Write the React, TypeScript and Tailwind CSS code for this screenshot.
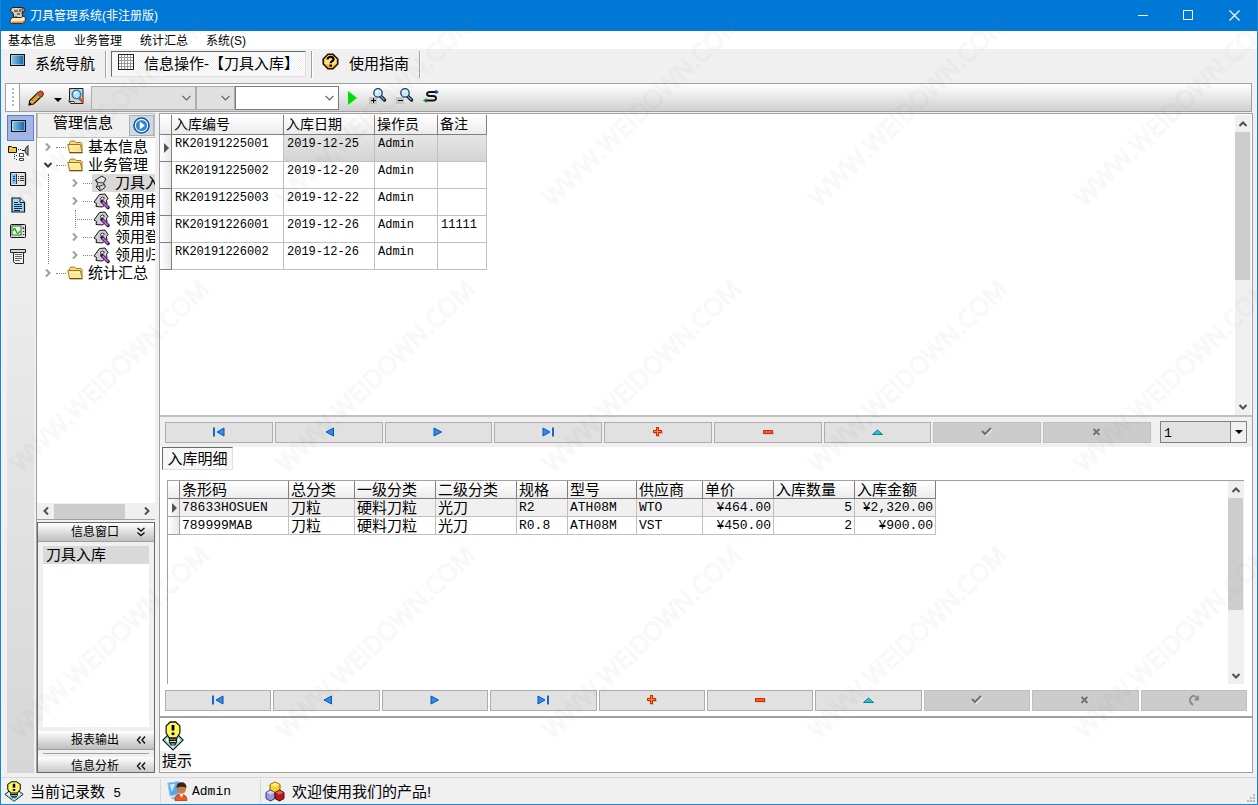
import type { ReactNode } from "react";

const TREE_CHILDREN = [
  { label: "刀具入库", arrow: true, active: true },
  { label: "领用申请", arrow: true },
  { label: "领用审核", arrow: false },
  { label: "领用登记", arrow: true },
  { label: "领用归还", arrow: true },
];

const ORDERS = [
  ["RK20191225001", "2019-12-25", "Admin", ""],
  ["RK20191225002", "2019-12-20", "Admin", ""],
  ["RK20191225003", "2019-12-22", "Admin", ""],
  ["RK20191226001", "2019-12-26", "Admin", "11111"],
  ["RK20191226002", "2019-12-26", "Admin", ""],
];

const DETAIL_HEAD = ["条形码", "总分类", "一级分类", "二级分类", "规格", "型号", "供应商", "单价", "入库数量", "入库金额"];

const DETAILS = [
  ["78633HOSUEN", "刀粒", "硬料刀粒", "光刀", "R2", "ATH08M", "WTO", "¥464.00", "5", "¥2,320.00"],
  ["789999MAB", "刀粒", "硬料刀粒", "光刀", "R0.8", "ATH08M", "VST", "¥450.00", "2", "¥900.00"],
];

const NAV = ["first", "prev", "next", "last", "add", "remove", "edit", "post", "cancel", "refresh"];

/* ---------- icons ---------- */

function ScrollLogo() {
  return (
    <svg width="18" height="18" viewBox="0 0 18 18">
      <path d="M2 2q0-1.500 2-1.500h9q3 0 3 2.500T14 5.500h-1l1 5.500H5L4 6 1.500 4z" fill="#d6cfb8" stroke="#2b1c10" />
      <path d="M5 3h4v2H5zM8 6h3v2H8zM6 9h2v1H6zM10 2h2v3h-2z" fill="#77705f" />
      <path d="M13 1.500h2.500v3H13z" fill="#c08f5c" stroke="#5a3518" strokeWidth=".8" />
      <path d="M2 12q0-1.500 2-1.500h8.500l1.500-1.500 2.500 1.500-.5 4-2.500 2H3q-2 0-2-2z" fill="#fdeed0" stroke="#4a2a10" />
      <path d="M2 14.500h11l2-1v1.500l-2 1H3z" fill="#e2873a" />
    </svg>
  );
}

function ScreenIcon() {
  return (
    <svg width="16" height="13" viewBox="0 0 16 13" shapeRendering="crispEdges" className="shrink-0">
      <defs>
        <linearGradient id="screen" x1="0" x2="1">
          <stop offset="0" stopColor="#8fd0ee" />
          <stop offset="1" stopColor="#0d5c9e" />
        </linearGradient>
      </defs>
      <rect x="0.500" y="0.500" width="14" height="11" fill="url(#screen)" stroke="#111" />
      <rect x="1.500" y="1.500" width="12" height="9" fill="none" stroke="#cfeafa" strokeOpacity=".5" />
    </svg>
  );
}

function GridIcon() {
  return (
    <svg width="17" height="17" viewBox="0 0 17 17" shapeRendering="crispEdges" className="mb-1 shrink-0">
      <rect x="0.500" y="0.500" width="15" height="15" fill="#fff" stroke="#222" />
      <path d="M3.500 1v14M6.500 1v14M9.500 1v14M12.500 1v14M1 3.500h14M1 6.500h14M1 9.500h14M1 12.500h14" stroke="#999" />
    </svg>
  );
}

function HelpIcon() {
  return (
    <svg width="17" height="18" viewBox="0 0 17 18">
      <path d="M6 1.200h5l4.800 4.800v5L11 15.800H6L1.200 11V6z" fill="#f4b73a" stroke="#1a0c00" strokeWidth="1.500" />
      <path d="M6 2.500h4L14 6v4l-2 2-9-1V6z" fill="#ffe28c" />
      <path d="M5.500 6.500c0-3.400 6-3.400 6 0 0 1.800-2.800 1.600-2.800 3.700" fill="none" stroke="#000" strokeWidth="2.200" />
      <rect x="7.500" y="11.500" width="2.400" height="2.200" />
    </svg>
  );
}

function PencilIcon() {
  return (
    <svg width="16" height="16" viewBox="0 0 16 16">
      <path d="M1 15l.8-4.500L10 2.500l4 3.500-8.500 8z" fill="#f3b13c" stroke="#1a1200" strokeWidth="1.200" />
      <path d="M4 11l6.500-6.500M6 12.500l6-6" stroke="#8a520c" strokeDasharray="1.500 1" />
      <path d="M10.500 2q2-2 4-.2T14.500 6l-1.500 1-4-3.500z" fill="#ea4a26" stroke="#6a1a08" />
      <path d="M8.800 3.700l3.800 3.800" stroke="#4f9a68" strokeWidth="1.600" />
      <path d="M1 15l.5-3L4 14.300z" />
    </svg>
  );
}

function FindIcon() {
  return (
    <svg width="17" height="17" viewBox="0 0 17 17">
      <path d="M1.500.5h13.500v15H3L.8 13.500 1.500 12z" fill="#d4d4d4" stroke="#222" />
      <path d="M1 13.500h5l1 2" stroke="#333" fill="#fff" />
      <path d="M11 10l4 4" stroke="#e0501a" strokeWidth="2.600" />
      <circle cx="8.500" cy="6.500" r="4.200" fill="#b4e6fa" stroke="#2583b8" strokeWidth="1.600" />
      <path d="M6.500 6q.5-2 2.500-2" stroke="#fff" fill="none" strokeWidth="1.300" />
    </svg>
  );
}

function LensIcon({ plus }: { plus?: boolean }) {
  return (
    <svg width="18" height="17" viewBox="0 0 18 17">
      <path d="M0 9h8v7H0z" fill="#c4c4c4" />
      <path d="M11.500 8l4 4" stroke="#111" strokeWidth="3.400" strokeLinecap="round" />
      <path d="M11.500 8l4 4" stroke="#6ea4e0" strokeWidth="1.500" />
      <circle cx="9" cy="4.900" r="4.200" fill="#c8effc" stroke="#1c3a60" strokeWidth="1.300" />
      <path d="M7 5q.3-2 2-2.200" fill="none" stroke="#fff" strokeWidth="1.300" />
      <path d={plus ? "M2 12.500h5M4.500 10v5" : "M2 12.500h5"} stroke="#000" strokeWidth="1" shapeRendering="crispEdges" />
    </svg>
  );
}

function SwapIcon() {
  return (
    <svg width="17" height="15" viewBox="0 0 17 15" fill="none">
      <path d="M13.500 3H7Q4 3 4 5t3 2h3q3 0 3 2.300T10 11.500H3" stroke="#111" strokeWidth="1.900" />
      <path d="M12.500.5L16 3l-3.500 2.500z" fill="#1e50d8" />
      <path d="M3.500 9L0 11.500 3.500 14z" fill="#1f8a1f" />
    </svg>
  );
}

function FlowIcon() {
  return (
    <svg width="21" height="17" viewBox="0 0 21 17" className="shrink-0">
      <path d="M.5 1.500h3l1 1h4v5h-8z" fill="#f9c63a" stroke="#111" />
      <path d="M10 4.500h4M6.500 9v5M8 10.500h2M8 14.500h2" stroke="#333" strokeDasharray="1 1" />
      <path d="M11.500 8.500h4v3h-4zM11.500 13.500h4v2h-4z" fill="#fff" stroke="#444" />
      <path d="M20 .5q-6 5 0 10z" fill="#aaa" stroke="#222" />
      <path d="M14 5.500h3" stroke="#111" />
    </svg>
  );
}

function FormIcon() {
  return (
    <svg width="17" height="15" viewBox="0 0 17 15" className="shrink-0">
      <rect x="0.500" y="0.500" width="15" height="13" rx="1" fill="#e4e4e4" stroke="#111" strokeWidth="1.200" />
      <rect x="2" y="2" width="4" height="10" fill="#7cc4ee" />
      <path d="M3 4.500h2M3 6.500h2M3 8.500h2" stroke="#0a4f8a" />
      <path d="M6.500 2v10M8 4.500h1M10 4.500h4M8 6.500h1M10 6.500h4M8 8.500h1M10 8.500h4" stroke="#333" />
    </svg>
  );
}

function DocIcon() {
  return (
    <svg width="15" height="16" viewBox="0 0 15 16" className="shrink-0">
      <path d="M1 1h8l4.500 4.500V15H1z" fill="#9fd8f5" stroke="#111" strokeWidth="1.200" />
      <path d="M9 1v4.500h4.500" fill="#e8f7ff" stroke="#111" />
      <path d="M3 5.500h4M3 7.500h8M3 9.500h8M3 11.500h8M3 13.500h6" stroke="#0c2a4a" />
    </svg>
  );
}

function WaveIcon() {
  return (
    <svg width="17" height="15" viewBox="0 0 17 15" className="shrink-0">
      <rect x="0.500" y="0.500" width="15" height="13" rx="1" fill="#ddd" stroke="#111" />
      <rect x="2" y="2" width="9" height="9" fill="#e4ffe4" stroke="#3a6a3a" />
      <path d="M3 7q1.500-5 3 0t4 0" fill="none" stroke="#10b010" strokeWidth="1.300" />
      <path d="M13.500 3v2M13.500 7v1M13.500 10v1" stroke="#333" strokeWidth="1.300" />
    </svg>
  );
}

function PrinterIcon() {
  return (
    <svg width="17" height="16" viewBox="0 0 17 16" className="shrink-0">
      <path d="M.5.500h15v3H.5z" fill="#d8d8d8" stroke="#222" />
      <path d="M3.500 3.500h10v11h-8.500l-1.500-2z" fill="#f4f4f4" stroke="#222" />
      <path d="M5 5.500h7M5 7.500h7M5 9.500h7M5 11.500h5" stroke="#666" />
    </svg>
  );
}

function FolderIcon() {
  return (
    <svg width="17" height="14" viewBox="0 0 17 14" className="mb-px shrink-0">
      <path d="M2.500 11V2.500L4 1h3.500l1.500 1.500H14l1 1V11z" fill="#f6dc80" stroke="#a07a18" />
      <path d="M.8 4.500h12.500l2 8H2.500z" fill="#ffe994" stroke="#a07a18" />
      <path d="M2.500 12.800h13" stroke="#5a4208" />
      <path d="M3 6.500h9.500" stroke="#fff8d0" />
    </svg>
  );
}

function RollIcon() {
  return (
    <svg width="16" height="17" viewBox="0 0 16 17">
      <path d="M2.500 5L9 1l4 3-2.500 4 2 4L7 16l-4-4 2-3z" fill="#dedede" stroke="#222" />
      <path d="M2.500 5l3 2.500L10.500 8M3 12l3.500-1L7 16M6.500 11l5-1.500" stroke="#333" fill="none" />
      <path d="M8 3l3 1.500" stroke="#fff" />
    </svg>
  );
}

function TagIcon() {
  return (
    <svg width="18" height="17" viewBox="0 0 18 17">
      <path d="M6.500 1.500L12 1l3 4.500-1.500 2L14 11l-5 3-6-.5.500-3L1 9z" fill="#cfcfcf" stroke="#111" />
      <path d="M7.500 5q2-2 4 0l-3 3z" fill="#fff" stroke="#333" />
      <path d="M9 8.500l6 6" stroke="#2a1038" strokeWidth="3.400" strokeLinecap="round" />
      <path d="M9.500 9l5.500 5.500" stroke="#c05ce0" strokeWidth="1.800" />
    </svg>
  );
}

function PlayCircle() {
  return (
    <svg width="17" height="17" viewBox="0 0 17 17">
      <circle cx="8.500" cy="8.500" r="7.500" fill="#fff" stroke="#0f56a8" strokeWidth="1.600" />
      <circle cx="8.500" cy="8.500" r="5.600" fill="#2f86d8" />
      <path d="M6.800 4.600v7.800l5-3.900z" fill="#fff" />
    </svg>
  );
}

function BulbIcon({ size }: { size: "lg" | "sm" }) {
  return (
    <svg width={size === "lg" ? 22 : 20} height={size === "lg" ? 30 : 21} viewBox="0 0 24 30" preserveAspectRatio="none" className="shrink-0">
      <path d="M12 9L23 19 12 29 1 19z" fill="#fff" stroke="#111" strokeWidth="1.200" />
      <path d="M12 11l9 8-9 8.500L3 19z" fill="#fff" stroke="#19d6d6" />
      <path d="M8 17h8v4l-2 3h-4l-2-3z" fill="#ddd" stroke="#111" strokeWidth="1.200" />
      <path d="M8 19.200h8M9 21.800h6" stroke="#111" strokeWidth="1.400" />
      <path d="M9 1h6l4.500 4v7L16 17H8l-3.500-5V5z" fill="#fdf85a" stroke="#111" strokeWidth="1.300" />
      <path d="M12 4v5.500" stroke="#000" strokeWidth="3" />
      <rect x="10.500" y="11.500" width="3" height="2.600" />
    </svg>
  );
}

function UserIcon() {
  return (
    <svg width="21" height="20" viewBox="0 0 21 20" className="shrink-0">
      <path d="M.8 2l11-1.500v13L3 15z" fill="#58a6ea" stroke="#9cc9ee" />
      <path d="M2.500 3.500l6-1L5 11z" fill="#c4e8fc" />
      <path d="M4 16.500l6-1.500v3l-5 .5z" fill="#a9bccd" />
      <path d="M8 19.500q-.5-6 6-6.500 6 .5 6 6.500z" fill="#ea5a24" stroke="#a83a10" strokeWidth=".8" />
      <circle cx="14.500" cy="8" r="4.600" fill="#d27a3c" />
      <path d="M9.500 7q0-5.800 5-5.800T19.500 7q-5-2.500-10 0z" fill="#33241c" />
      <path d="M12.500 13h4l-2 3.500z" fill="#fff" />
    </svg>
  );
}

function CubesIcon() {
  return (
    <svg width="20" height="21" viewBox="0 0 20 21" className="shrink-0">
      <path d="M10 1l5 2.500V10l-5 2-5-2V3.500z" fill="#ffd21e" stroke="#8a5a00" />
      <path d="M10 1.500l4.500 2.200L10 6 5.500 3.700z" fill="#fff27a" />
      <path d="M5.500 9l4.500 2.500v6L5.500 20 1 17.500v-6z" fill="#9a9ae0" stroke="#33336a" />
      <path d="M5.500 9.500l4 2-4 2-4-2z" fill="#d4d4ff" />
      <path d="M14.500 9l4.500 2.500v6L14.500 20 10 17.500v-6z" fill="#b81818" stroke="#4a0404" />
      <path d="M14.500 9.500l4 2-4 2-4-2z" fill="#e86050" />
    </svg>
  );
}

function Chevron({ dir, color = "#505050" }: { dir: "up" | "down" | "left" | "right"; color?: string }) {
  const d = { up: "M1.500 7L5 3.500 8.500 7", down: "M1.500 3L5 6.500 8.500 3", left: "M7 1.500L3.500 5 7 8.500", right: "M3 1.500L6.500 5 3 8.500" }[dir];
  return (
    <svg width="10" height="10" viewBox="0 0 10 10" fill="none" stroke={color} strokeWidth="2" className="shrink-0">
      <path d={d} />
    </svg>
  );
}

function NavGlyph({ name }: { name: string }) {
  const blue = { fill: "#2a8cf0", stroke: "#0a55b4" };
  return (
    <svg width="14" height="14" viewBox="0 0 14 14">
      {name === "first" && <><path d="M2 2.500v9" stroke="#1668cc" strokeWidth="2" /><path d="M12 3v8L5 7z" {...blue} /></>}
      {name === "prev" && <path d="M11.500 3v8L4 7z" {...blue} />}
      {name === "next" && <path d="M3 3v8l7.500-4z" {...blue} />}
      {name === "last" && <><path d="M12 2.500v9" stroke="#1668cc" strokeWidth="2" /><path d="M2 3v8l7-4z" {...blue} /></>}
      {name === "add" && <><path d="M7 3v9M3 7.500h9" stroke="#999" strokeWidth="3" opacity=".5" /><path d="M6.500 2v9M2 6.500h9" stroke="#d02c00" strokeWidth="3" /><path d="M6.500 3v7M3 6.500h7" stroke="#ff8a3a" /></>}
      {name === "remove" && <><path d="M3 8h10" stroke="#999" strokeWidth="3" opacity=".5" /><path d="M2 7h10" stroke="#d82c00" strokeWidth="4" /><path d="M3 7h8" stroke="#ff9a3a" /></>}
      {name === "edit" && <path d="M1.500 9.500h10l-5-4.500z" fill="#25c4dc" stroke="#0c7f94" />}
      {name === "post" && <><path d="M3 7l3 3 6-6" fill="none" stroke="#eee" strokeWidth="2" /><path d="M2 6l3 3 6-6" fill="none" stroke="#707070" strokeWidth="2" /></>}
      {name === "cancel" && <><path d="M4 4.500l6 6m0-6l-6 6" stroke="#eee" strokeWidth="2" /><path d="M3.500 4l6 6m0-6l-6 6" stroke="#707070" strokeWidth="2" /></>}
      {name === "refresh" && <><path d="M6 12Q1 8 4 4.500T10 5" fill="none" stroke="#8c8c8c" strokeWidth="2" /><path d="M12 2v5.500H6.500z" fill="#8c8c8c" /></>}
    </svg>
  );
}

/* ---------- shared pieces ---------- */

function Navigator({ names }: { names: string[] }) {
  return (
    <div className="flex min-w-0 flex-1 gap-0.5">
      {names.map((n) => {
        const off = ["post", "cancel", "refresh"].includes(n);
        return (
          <button
            key={n}
            aria-label={n}
            disabled={off}
            className={`flex h-[21px] flex-1 items-center justify-center border ${off ? "border-[#bfbfbf] bg-[#ccc]" : "border-[#adadad] bg-[#e1e1e1]"}`}
          >
            <NavGlyph name={n} />
          </button>
        );
      })}
    </div>
  );
}

function VScroll({ thumb }: { thumb: string }) {
  return (
    <div className="flex w-4 shrink-0 flex-col bg-[#f0f0f0]">
      <div className="flex h-[17px] items-center justify-center"><Chevron dir="up" /></div>
      <div className="flex-1"><div className={`w-[15px] bg-[#cdcdcd] ${thumb}`} /></div>
      <div className="flex h-[17px] items-center justify-center"><Chevron dir="down" /></div>
    </div>
  );
}

function Combo({ className, label, children }: { className: string; label: string; children?: ReactNode }) {
  return (
    <div className={`relative h-6 border ${className}`}>
      <select aria-label={label} className="size-full appearance-none bg-transparent outline-none">
        <option>{children}</option>
      </select>
      <div className="pointer-events-none absolute inset-y-0 right-1 flex items-center">
        <svg width="9" height="6" viewBox="0 0 9 6" fill="none" stroke="#606060" strokeWidth="1.200"><path d="M.5.800l4 4 4-4" /></svg>
      </div>
    </div>
  );
}

function Separator() {
  return <div className="h-[27px] w-0.5 border-l border-[#a0a0a0] bg-white" />;
}

function RowMarker() {
  return (
    <svg width="6" height="10" viewBox="0 0 6 10" className="ml-1">
      <path d="M0 0v10l5-5z" fill="#555" />
    </svg>
  );
}

function BarTitle({ title, open, height }: { title: string; open?: boolean; height: string }) {
  return (
    <button className={`flex w-full shrink-0 items-center overflow-hidden border-b border-[#a0a0a0] bg-linear-to-b from-white to-[#bfbfbf] pr-2 pl-[33px] text-xs ${height}`}>
      <span className="flex-1 text-left">{title}</span>
      <svg width="10" height="10" viewBox="0 0 10 10" fill="none" stroke="#111" strokeWidth="1.400">
        <path d={open ? "M1.500 1L5 4l3.500-3M1.500 5.500L5 8.500l3.500-3" : "M4.500 1.500L1.500 5l3 3.500M9 1.500L6 5l3 3.500"} />
      </svg>
    </button>
  );
}

function TreeRoot({ label, open }: { label: string; open?: boolean }) {
  return (
    <li className="flex h-[18px] items-center">
      <span className="ml-[6px]"><Chevron dir={open ? "down" : "right"} color={open ? "#333" : "#a0a0a0"} /></span>
      <span className="mr-px ml-[3px] w-[10px] border-t border-dotted border-[#808080]" />
      <FolderIcon />
      <span className="ml-1 whitespace-nowrap">{label}</span>
    </li>
  );
}

function Watermark() {
  return (
    <svg className="pointer-events-none absolute inset-0 size-full" aria-hidden="true">
      <defs>
        <g id="mark">
          <text
            transform="rotate(-44)"
            fill="none"
            stroke="#808080"
            strokeOpacity=".07"
            strokeWidth="1.500"
            fontSize="25"
            className="font-['Open_Sans',sans-serif]"
          >
            WWW.WEIDOWN.COM
          </text>
        </g>
      </defs>
      {[0, 1, 2, 3, 4].map((c) =>
        [0, 1, 2].map((r) => <use key={`${c}-${r}`} href="#mark" x={20 + c * 266} y={208 + r * 266} />)
      )}
    </svg>
  );
}

/* ---------- panels ---------- */

function Sidebar() {
  return (
    <aside className="flex w-[120px] shrink-0 flex-col overflow-hidden border-l border-[#a0a0a0] pr-px">
      <div className="flex h-[25px] shrink-0 items-center justify-between border border-[#c0c0c0] bg-[#f0f0f0] pl-[15px] text-[15px]">
        <span className="mb-1 whitespace-nowrap">管理信息</span>
        <button aria-label="展开" className="flex h-[21px] w-[25px] items-center justify-center border border-[#a8b0bc] bg-[#d3d7de]">
          <PlayCircle />
        </button>
      </div>

      {/* tree */}
      <div className="flex min-h-0 flex-1 flex-col bg-white">
        <ul className="min-h-0 flex-1 overflow-hidden text-[15px] leading-[18px]">
          <TreeRoot label="基本信息" />
          <TreeRoot label="业务管理" open />
          <li className="ml-[11px] border-l border-dotted border-[#808080]">
            <ul>
              {TREE_CHILDREN.map((t) => (
                <li key={t.label} className="flex h-[18px] items-center">
                  <span className="ml-[21px] flex h-full w-[11px] shrink-0 items-center">
                    {t.arrow ? <Chevron dir="right" color="#a0a0a0" /> : <i className="ml-[5px] h-full w-px border-l border-dotted border-[#808080]" />}
                  </span>
                  <span className={`h-0 shrink-0 border-t border-dotted border-[#808080] ${t.arrow ? "ml-0.5 w-[9px]" : "-ml-1 w-[15px]"}`} />
                  <span className={`flex h-full min-w-0 flex-1 items-center overflow-hidden ${t.active ? "bg-[#d9d9d9]" : ""}`}>
                    <span className="flex w-[23px] shrink-0 pl-px">{t.active ? <RollIcon /> : <TagIcon />}</span>
                    <span className="whitespace-nowrap">{t.label}</span>
                  </span>
                </li>
              ))}
            </ul>
          </li>
          <TreeRoot label="统计汇总" />
        </ul>
        <div className="flex h-[17px] shrink-0 items-center border-b border-[#a0a0a0] bg-[#f0f0f0]">
          <div className="flex w-[17px] justify-center"><Chevron dir="left" /></div>
          <div className="flex h-[15px] flex-1"><div className="w-[71px] bg-[#cdcdcd]" /></div>
          <div className="flex w-[17px] justify-center"><Chevron dir="right" /></div>
        </div>
      </div>

      {/* accordion, the last bar runs out under the frame */}
      <div className="mt-0.5 flex h-[251px] shrink-0 flex-col overflow-hidden border border-[#696969] bg-[#f0f0f0]">
        <BarTitle title="信息窗口" open height="h-[19px]" />
        <div className="mx-[5px] my-1 h-[181px] shrink-0 bg-white text-[15px] leading-[18px]">
          <div className="bg-[#d9d9d9] pl-[3px]">刀具入库</div>
        </div>
        <BarTitle title="报表输出" height="h-[19px]" />
        <div className="mx-[5px] my-[3px] h-px shrink-0 bg-[#a0a0a0]" />
        <BarTitle title="信息分析" height="h-[19px]" />
      </div>
    </aside>
  );
}

function OrderTable() {
  const head = "border-r border-b border-[#808080] bg-linear-to-b from-white to-[#ececec] p-0";
  return (
    <table className="w-[327px] table-fixed border-separate border-spacing-0 self-start">
      <colgroup>
        <col className="w-[12px]" /><col className="w-[112px]" /><col className="w-[91px]" /><col className="w-[63px]" /><col className="w-[49px]" />
      </colgroup>
      <thead>
        <tr className="h-5 text-left text-sm leading-[19px]">
          <th className={head} />
          {["入库编号", "入库日期", "操作员", "备注"].map((h) => (
            <th key={h} className={`${head} pl-0.5 font-normal whitespace-nowrap`}>{h}</th>
          ))}
        </tr>
      </thead>
      <tbody>
        {ORDERS.map((row, i) => (
          <tr key={row[0]} className="h-[27px] align-top font-['Liberation_Mono','Noto_Sans_CJK_SC',monospace] text-xs leading-[18px]">
            <td className="border-r border-b border-[#808080] bg-linear-to-r from-white to-[#e8e8e8] p-0 align-middle">{i === 0 && <RowMarker />}</td>
            {row.map((v, j) => (
              <td key={j} className={`border-r border-b border-[#c0c0c0] py-0 pr-0 pl-[3px] whitespace-nowrap ${i === 0 && j > 0 ? "bg-linear-to-b from-[#e6e6e6] to-[#d4d4d4]" : ""}`}>{v}</td>
            ))}
          </tr>
        ))}
      </tbody>
    </table>
  );
}

function DetailTable() {
  const head = "border-r border-b border-[#808080] bg-linear-to-b from-white to-[#ececec] p-0";
  return (
    <table className="w-[768px] table-fixed border-separate border-spacing-0 self-start text-[15px]">
      <colgroup>
        <col className="w-[12px]" /><col className="w-[109px]" /><col className="w-[66px]" /><col className="w-[81px]" />
        <col className="w-[81px]" /><col className="w-[51px]" /><col className="w-[69px]" /><col className="w-[66px]" />
        <col className="w-[71px]" /><col className="w-[81px]" /><col className="w-[81px]" />
      </colgroup>
      <thead>
        <tr className="h-[18px] text-left leading-[17px]">
          <th className={head} />
          {DETAIL_HEAD.map((h) => (
            <th key={h} className={`${head} pl-0.5 font-normal whitespace-nowrap`}>{h}</th>
          ))}
        </tr>
      </thead>
      <tbody>
        {DETAILS.map((row, i) => (
          <tr key={row[0]} className={`h-[18px] leading-[17px] ${i === 0 ? "bg-[#f0f0f0]" : ""}`}>
            <td className="border-r border-b border-[#a0a0a0] bg-linear-to-r from-white to-[#e8e8e8] p-0">{i === 0 && <RowMarker />}</td>
            {row.map((v, j) => (
              <td
                key={j}
                className={`h-[18px] overflow-hidden border-r border-b border-[#c0c0c0] px-0.5 py-0 whitespace-nowrap ${j > 6 ? "text-right" : ""} ${j > 0 && j < 4 ? "" : "font-['Liberation_Mono','Noto_Sans_CJK_SC',monospace] text-[13px]"}`}
              >
                {v}
              </td>
            ))}
          </tr>
        ))}
      </tbody>
    </table>
  );
}

const pressed = "border border-t-[#696969] border-r-[#e0e0e0] border-b-[#e0e0e0] border-l-[#696969] bg-[repeating-conic-gradient(#fff_0_25%,#f0f0f0_0_50%)] bg-[length:2px_2px]";

export default function App() {
  return (
    <div className="relative flex h-screen min-h-[600px] flex-col overflow-hidden border border-t-0 border-[#1883d7] bg-[#f0f0f0] font-['Liberation_Sans','Noto_Sans_CJK_SC',sans-serif] text-black">
      {/* title bar */}
      <header className="flex h-[31px] shrink-0 items-center bg-[#0078d7] pl-2 text-white">
        <ScrollLogo />
        <h1 className="ml-[3px] flex-1 text-xs">刀具管理系统(非注册版)</h1>
        <button aria-label="最小化" className="flex h-full w-[46px] items-center justify-center">
          <svg width="11" height="11" stroke="#fff"><path d="M0 5.500h10" /></svg>
        </button>
        <button aria-label="最大化" className="flex h-full w-[45px] items-center justify-center">
          <svg width="11" height="11" stroke="#fff" fill="none"><path d="M.5.5h9v9h-9z" /></svg>
        </button>
        <button aria-label="关闭" className="flex h-full w-[46px] items-center justify-center">
          <svg width="11" height="11" stroke="#fff" strokeWidth="1.200"><path d="M.5.5l10 10M10.500.5l-10 10" /></svg>
        </button>
      </header>

      {/* menu */}
      <nav className="flex h-[18px] shrink-0 items-center gap-[18px] bg-white pt-0.5 pl-[7px] text-xs">
        {["基本信息", "业务管理", "统计汇总", "系统(S)"].map((m) => (
          <button key={m}>{m}</button>
        ))}
      </nav>

      {/* page buttons */}
      <div className="flex h-[34px] shrink-0 items-start pt-0.5 text-[15px]">
        <button className="flex h-[26px] w-[104px] items-center gap-[9px] pl-[9px]">
          <span className="mb-2"><ScreenIcon /></span>
          <span>系统导航</span>
        </button>
        <Separator />
        <button className={`mr-[5px] ml-1 flex h-[26px] w-[195px] items-center gap-[9px] pl-1.5 ${pressed}`}>
          <GridIcon />
          <span className="whitespace-nowrap">信息操作-【刀具入库】</span>
        </button>
        <Separator />
        <button className="flex h-[26px] w-[106px] items-center gap-[10px] pl-[9px]">
          <span className="mb-1"><HelpIcon /></span>
          <span>使用指南</span>
        </button>
        <Separator />
      </div>

      {/* tool bar */}
      <div className="mr-[5px] ml-1 flex h-[29px] shrink-0 items-center border border-[#a0a0a0] bg-linear-to-b from-white to-[#d0d0d0]">
        <div className="flex h-full w-[14px] items-center justify-center border-r border-[#a0a0a0] bg-white">
          <i className="h-5 w-0.5 bg-[repeating-linear-gradient(#b8b8b8_0_2px,#fff_2px_4px)]" />
        </div>
        <button aria-label="编辑" className="ml-2 flex"><PencilIcon /></button>
        <button aria-label="更多" className="ml-2.5 flex pt-1"><svg width="8" height="4"><path d="M0 0h8L4 4z" /></svg></button>
        <button aria-label="查找" className="mr-[6px] ml-[6px] flex pb-0.5"><FindIcon /></button>
        <Combo label="字段" className="w-[105px] border-[#adadad] bg-[#e0e0e0]" />
        <Combo label="条件" className="w-[39px] border-[#adadad] bg-[#e0e0e0]" />
        <Combo label="值" className="w-[104px] border-[#7a7a7a] bg-white" />
        <button aria-label="运行" className="ml-[9px] flex"><svg width="9" height="14"><path d="M0 0v14l9-7z" fill="#00e000" /></svg></button>
        <button aria-label="放大" className="ml-3 flex pb-0.5"><LensIcon plus /></button>
        <button aria-label="缩小" className="ml-[9px] flex pb-0.5"><LensIcon /></button>
        <button aria-label="切换" className="ml-[9px] flex pb-0.5"><SwapIcon /></button>
      </div>

      <div className="mt-px flex min-h-0 flex-1 pr-1 pl-1.5">
        {/* icon strip */}
        <div className="mt-0.5 mr-0.5 flex w-[27px] shrink-0 flex-col items-center bg-linear-to-b from-[#f4f4f4] to-[#d6d6d6]">
          <button aria-label="导航" className="flex h-[26px] w-full items-center justify-center border border-[#5a80d0] bg-[#a0b6e6] pr-1 pb-1"><ScreenIcon /></button>
          {[FlowIcon, FormIcon, DocIcon, WaveIcon, PrinterIcon].map((Icon, i) => (
            <button key={i} aria-label={`视图${i + 1}`} className="flex h-[26px] w-full items-center justify-center pr-1 pb-0.5"><Icon /></button>
          ))}
        </div>

        <Sidebar />

        {/* workspace */}
        <main className="ml-[3px] flex min-w-0 flex-1 flex-col border border-[#a0a0a0] bg-white">
          <section className="flex h-[303px] shrink-0 justify-between border-b-2 border-[#c0c0c0] pt-px pr-px">
            <OrderTable />
            <VScroll thumb="h-[148px]" />
          </section>
          <div className="flex h-[30px] shrink-0 items-center bg-[#f0f0f0] px-[5px]">
            <Navigator names={NAV.slice(0, 9)} />
            <div className="relative ml-[9px] h-[22px] w-[87px] border border-[#808080] bg-[#e1e1e1]">
              <select aria-label="页码" className="block size-full appearance-none pt-0.5 pl-[3px] font-['Liberation_Mono',monospace] text-[13px] outline-none">
                <option>1</option>
              </select>
              <div className="pointer-events-none absolute inset-y-0 right-0 flex w-4 items-center justify-center border-l border-[#808080] bg-[#f0f0f0]">
                <svg width="8" height="4"><path d="M0 0h8L4 4z" /></svg>
              </div>
            </div>
          </div>

          <section className="flex min-h-0 flex-1 flex-col">
            <div className="flex h-[33px] shrink-0 items-start pl-0.5">
              <button className={`h-[23px] w-[71px] text-center text-[15px] leading-[22px] ${pressed}`}>入库明细</button>
            </div>
            <div className="mr-2 ml-[7px] flex min-h-0 flex-1 justify-between border-t border-l border-[#a0a0a0]">
              <DetailTable />
              <VScroll thumb="h-[112px]" />
            </div>
            <div className="flex h-8 shrink-0 items-center px-[5px]">
              <Navigator names={NAV} />
            </div>
          </section>

          <footer className="h-14 shrink-0 border-t-2 border-[#a0a0a0] text-[15px]">
            <div className="flex w-[31px] flex-col items-start pt-[3px]">
              <span className="pl-0.5"><BulbIcon size="lg" /></span>
              <span className="w-full bg-[#f0f0f0] pl-0.5 leading-5 whitespace-nowrap">提示</span>
            </div>
          </footer>
        </main>
      </div>

      {/* status bar */}
      <footer className="mt-1 flex h-[27px] shrink-0 items-center border-t border-[#d7d7d7] text-[15px]">
        <div className="flex h-6 w-[160px] items-center gap-[6px] border-r border-[#d7d7d7] pl-[3px]">
          <BulbIcon size="sm" />
          <span className="pt-0.5">当前记录数&nbsp; <span className="font-['Liberation_Mono',monospace] text-[13px]">5</span></span>
        </div>
        <div className="flex h-6 w-[100px] items-center gap-1 border-r border-[#d7d7d7] pl-[6px]">
          <UserIcon />
          <span className="pt-0.5 font-['Liberation_Mono',monospace] text-[13px]">Admin</span>
        </div>
        <div className="flex flex-1 items-center gap-[7px] pl-1">
          <CubesIcon />
          <span className="pt-0.5">欢迎使用我们的产品!</span>
        </div>
        <svg width="10" height="10" className="mr-px self-end" fill="#b8b8b8">
          <path d="M7 0h2v2H7zM7 3h2v2H7zM7 6h2v2H7zM4 3h2v2H4zM4 6h2v2H4zM1 6h2v2H1z" />
        </svg>
      </footer>

      <Watermark />
    </div>
  );
}
